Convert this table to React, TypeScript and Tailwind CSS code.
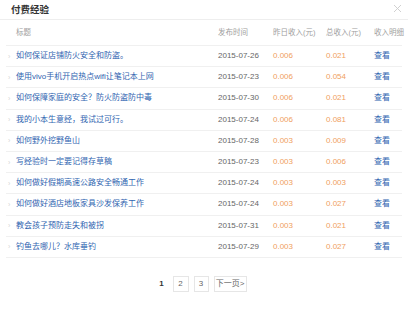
import React from 'react';

interface Row {
  title: string;
  date: string;
  yesterday: string;
  total: string;
}

const rows: Row[] = [
  { title: '如何保证店铺防火安全和防盗。', date: '2015-07-26', yesterday: '0.006', total: '0.021' },
  { title: '使用vivo手机开启热点wifi让笔记本上网', date: '2015-07-23', yesterday: '0.006', total: '0.054' },
  { title: '如何保障家庭的安全？防火防盗防中毒', date: '2015-07-30', yesterday: '0.006', total: '0.021' },
  { title: '我的小本生意经，我试过可行。', date: '2015-07-24', yesterday: '0.006', total: '0.081' },
  { title: '如何野外挖野鱼山', date: '2015-07-28', yesterday: '0.003', total: '0.009' },
  { title: '写经验时一定要记得存草稿', date: '2015-07-23', yesterday: '0.003', total: '0.006' },
  { title: '如何做好假期高速公路安全畅通工作', date: '2015-07-24', yesterday: '0.003', total: '0.003' },
  { title: '如何做好酒店地板家具沙发保养工作', date: '2015-07-24', yesterday: '0.003', total: '0.027' },
  { title: '教会孩子预防走失和被拐', date: '2015-07-31', yesterday: '0.003', total: '0.021' },
  { title: '钓鱼去哪儿？水库垂钓', date: '2015-07-29', yesterday: '0.003', total: '0.027' },
];

const cols = 'grid grid-cols-[10px_202px_55px_53px_48px_1fr] items-center whitespace-nowrap';

export default function App() {
  return (
    <div
      className="w-[408px] h-[314px] bg-white relative overflow-hidden text-[8px] leading-none"
      style={{ fontFamily: '"Liberation Sans", "Noto Sans CJK SC", sans-serif' }}
    >
      {/* 标题栏 */}
      <div className="h-[20px] flex items-center px-[11px] border-b border-[#eeeeee]">
        <span className="text-[9.5px] font-bold text-[#333333]">付费经验</span>
      </div>
      <svg className="absolute right-[6px] top-[4px]" width="9" height="9" viewBox="0 0 9 9">
        <path d="M1 1L8 8M8 1L1 8" stroke="#cccccc" strokeWidth="0.9" />
      </svg>

      <div className="px-[6px]">
        <div className={`${cols} h-[25px] text-[#a0a0a0] text-[7.5px]`}>
          <span></span>
          <span>标题</span>
          <span>发布时间</span>
          <span>昨日收入(元)</span>
          <span>总收入(元)</span>
          <span>收入明细</span>
        </div>
        {rows.map((r) => (
          <div key={r.title} className={`${cols} h-[21.2px] border-t border-[#f0f0f0]`}>
            <span className="text-[#d6d6d6] text-[7px] pl-[2px]">›</span>
            <span className="text-[#2f64b0]">{r.title}</span>
            <span className="text-[#666666]">{r.date}</span>
            <span className="text-[#f0a060]">{r.yesterday}</span>
            <span className="text-[#f0a060]">{r.total}</span>
            <span className="text-[#2f64b0]">查看</span>
          </div>
        ))}
        <div className="border-t border-[#f0f0f0]"></div>
      </div>

      {/* 分页 */}
      <div className="flex items-center justify-center gap-[5px] mt-[18px] pr-[6px] text-[8px]">
        <span className="w-[12px] text-center font-bold text-[#333333]">1</span>
        <span className="w-[16px] h-[16px] flex items-center justify-center border border-[#e6e6e6] text-[#666666]">2</span>
        <span className="w-[15px] h-[16px] flex items-center justify-center border border-[#e6e6e6] text-[#666666]">3</span>
        <span className="w-[33px] h-[16px] flex items-center justify-center border border-[#e6e6e6] text-[#666666]">下一页&gt;</span>
      </div>
    </div>
  );
}
